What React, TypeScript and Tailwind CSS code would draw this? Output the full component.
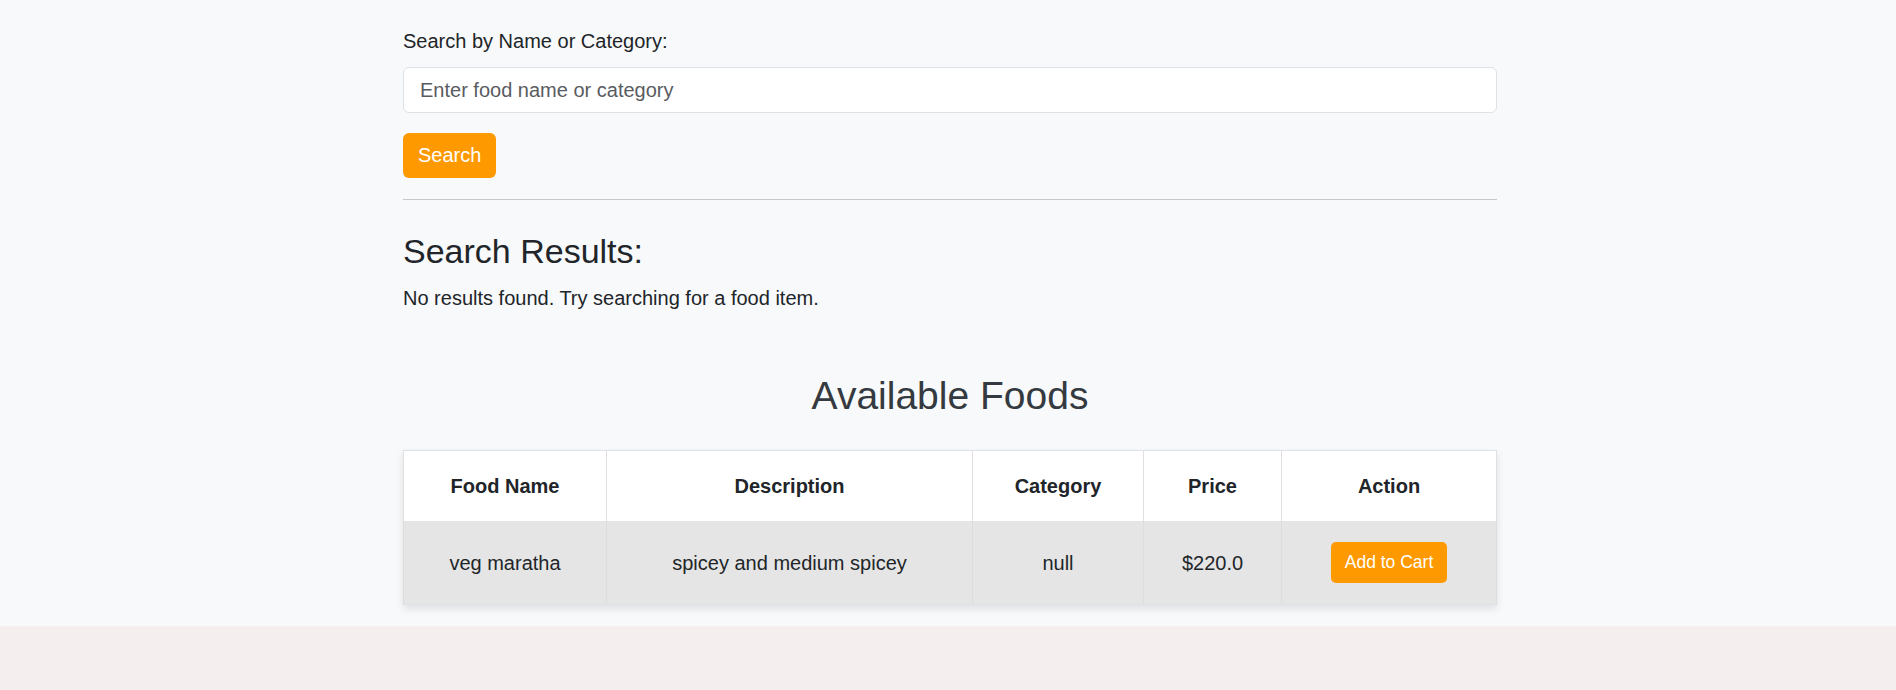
import React from 'react';

const foods = [
  { name: 'veg maratha', description: 'spicey and medium spicey', category: 'null', price: '$220.0' },
];

const App = () => {
  return (
    <div className="min-h-screen bg-[#f5eeee] font-['Liberation_Sans',Arial,sans-serif] text-[#212529]">
      <div className="bg-[#f8f9fa] pb-[21px]">
        <div className="mx-auto w-[1098px] pl-[4px] pt-[26px]">
          {/* Search form */}
          <label className="block text-[20px] leading-[30px] mb-[11px]">Search by Name or Category:</label>
          <input
            type="text"
            placeholder="Enter food name or category"
            className="block w-full h-[46px] bg-white border border-[#dee2e6] rounded-[6px] pl-[16px] text-[20px] outline-none placeholder:text-[#595c5f]"
          />
          <button className="mt-[20px] bg-[#ff9900] text-white text-[20px] leading-[25px] px-[15px] py-[10px] rounded-[6px]">
            Search
          </button>
          <hr className="mt-[21px] border-0 border-t border-[#c8c8c8]" />

          {/* Results */}
          <h3 className="mt-[31px] text-[34px] leading-[41px] mb-[11px]">Search Results:</h3>
          <p className="text-[20px] leading-[30px]">No results found. Try searching for a food item.</p>

          {/* Food table */}
          <h2 className="mt-[59px] text-center text-[39px] leading-[47px] text-[#343a40]">Available Foods</h2>
          <table className="mt-[31px] w-full table-fixed border-collapse border border-[#dee2e6] shadow-[0_4px_8px_rgba(0,0,0,0.1)] text-[20px]">
            <colgroup>
              <col className="w-[203px]" />
              <col className="w-[366px]" />
              <col className="w-[171px]" />
              <col className="w-[138px]" />
              <col />
            </colgroup>
            <thead>
              <tr className="bg-white">
                {['Food Name', 'Description', 'Category', 'Price', 'Action'].map((h) => (
                  <th key={h} className="border-x border-[#e0e0e0] py-[20px] leading-[30px] font-bold text-center">
                    {h}
                  </th>
                ))}
              </tr>
            </thead>
            <tbody>
              {foods.map((f) => (
                <tr key={f.name} className="bg-[#e5e5e5]">
                  <td className="border-x border-[#dddddd] py-[21px] leading-[30px] text-center align-middle">{f.name}</td>
                  <td className="border-x border-[#dddddd] py-[21px] leading-[30px] text-center align-middle">{f.description}</td>
                  <td className="border-x border-[#dddddd] py-[21px] leading-[30px] text-center align-middle">{f.category}</td>
                  <td className="border-x border-[#dddddd] py-[21px] leading-[30px] text-center align-middle">{f.price}</td>
                  <td className="border-x border-[#dddddd] py-[21px] text-center align-middle">
                    <button className="bg-[#ff9900] text-white text-[17.5px] leading-[21px] px-[14px] py-[10px] rounded-[5px] align-middle">
                      Add to Cart
                    </button>
                  </td>
                </tr>
              ))}
            </tbody>
          </table>
        </div>
      </div>
    </div>
  );
};

export default App;
